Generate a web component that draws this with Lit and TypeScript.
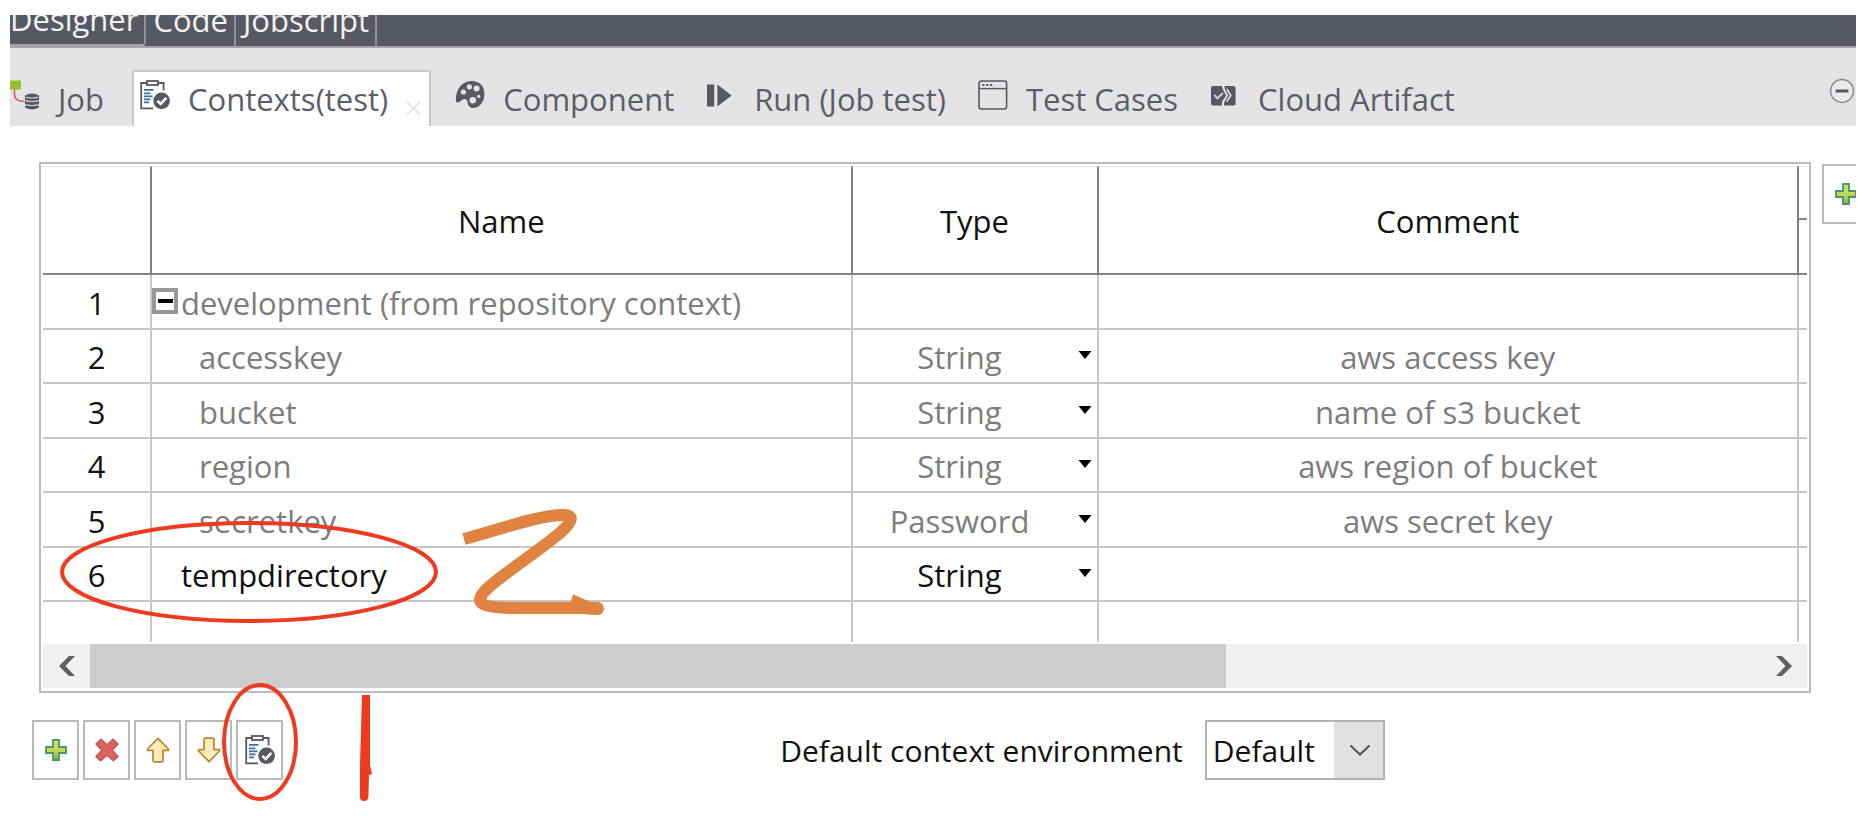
import { LitElement, html, css, svg, nothing } from "lit";
import { customElement, state } from "lit/decorators.js";
import { classMap } from "lit/directives/class-map.js";

interface ContextRow {
  id: number;
  name: string;
  type?: string;
  comment?: string;
  kind: "group" | "child" | "own";
}

const ROWS: ContextRow[] = [
  { id: 1, name: "development (from repository context)", kind: "group" },
  { id: 2, name: "accesskey", type: "String", comment: "aws access key", kind: "child" },
  { id: 3, name: "bucket", type: "String", comment: "name of s3 bucket", kind: "child" },
  { id: 4, name: "region", type: "String", comment: "aws region of bucket", kind: "child" },
  { id: 5, name: "secretkey", type: "Password", comment: "aws secret key", kind: "child" },
  { id: 6, name: "tempdirectory", type: "String", kind: "own" },
];

const contextsIcon = html`<svg class="icon" viewBox="0 0 30 30" aria-hidden="true">
  <path d="M7 3H1.2V28.4H13M18 3H23.6V10.5" fill="none" stroke="#565963" stroke-width="1.8" />
  <rect x="7" y="1" width="11" height="4" fill="none" stroke="#565963" stroke-width="1.8" />
  <path d="M4 9.9H13.5M4 13.4H10.5M4 16.4H12.5M4 19.4H10.5M4 22.4H9" stroke="#3f6f9f" stroke-width="1.6" />
  <circle cx="21.6" cy="20.8" r="8.3" fill="#565963" />
  <path d="M17.4 20.8L20.6 24L26.4 17.8" fill="none" stroke="#fff" stroke-width="2.6" />
</svg>`;

const jobIcon = html`<svg class="icon" viewBox="0 0 30 30" aria-hidden="true">
  <path d="M4.5 8V14.5Q4.5 21.5 15 21.5" fill="none" stroke="#d3605d" stroke-width="1.6" />
  <rect x="0" y="0.6" width="11" height="9" rx="1" fill="#98bf2e" />
  <path d="M15 15.5Q22 11.5 29 15.5V27.5Q22 31.5 15 27.5Z" fill="#565963" />
  <path d="M16 17.3Q22 18.7 28 17.3M15 20.6Q22 22.4 29 20.6M15 24.6Q22 26.4 29 24.6" fill="none" stroke="#d2d3d6" stroke-width="1.2" />
</svg>`;

const paletteIcon = html`<svg class="icon" viewBox="0 0 30 30" aria-hidden="true">
  <path d="M2.2 22.4C.6 22 .6 18 1.4 14.6C3.2 6.6 9 1 16.6 1C24.6 1 29.4 6 29.4 13.6C29.4 21.6 24.6 28 19 28C14.6 28 13 25.4 12.6 22.4C12 19 9.4 18.2 6.8 20C5 21.4 4 22.8 2.2 22.4Z" fill="#565963" />
  <g fill="#e4e4e4">
    <circle cx="8.4" cy="12" r="2.6" /><circle cx="14.4" cy="6.8" r="2.6" />
    <circle cx="21.6" cy="8.6" r="3" /><circle cx="17.8" cy="20.2" r="3.3" /><circle cx="23.8" cy="16.4" r="1.6" />
  </g>
</svg>`;

const runIcon = html`<svg class="icon" viewBox="0 0 30 30" aria-hidden="true">
  <path d="M1 4.5H8.2V26.5H1ZM11.4 4.5L25.6 15.5L11.4 26.5Z" fill="#565963" />
</svg>`;

const windowIcon = html`<svg class="icon" viewBox="0 0 30 30" aria-hidden="true">
  <rect x="1" y="1" width="27.6" height="28" rx="2.4" fill="none" stroke="#565963" stroke-width="1.6" />
  <path d="M1 8.6H28.6" stroke="#565963" stroke-width="1.4" />
  <path d="M4.4 4.9H14.6" stroke="#565963" stroke-width="2" stroke-dasharray="2.2 1.6" />
</svg>`;

const artifactIcon = html`<svg class="icon" viewBox="0 0 30 30" aria-hidden="true">
  <path d="M3 6H11.800L13.400 10.500L16.200 15.500L12 21.500V25.500H3Q1 25.500 1 23.500V8Q1 6 3 6Z" fill="#565963" />
  <path d="M14.400 6H23.600Q25.600 6 25.600 8V23.500Q25.600 25.500 23.600 25.500H14.200V22L18.200 15.500L15.200 10Z" fill="#565963" />
  <path d="M4.400 15L7.400 18.400L12.800 13" fill="none" stroke="#d4d5d8" stroke-width="2" />
  <path d="M16.800 9L20.800 15.500L16.600 21.600" fill="none" stroke="#e4e4e4" stroke-width="1.600" />
</svg>`;

const plusIcon = html`<svg class="tool-icon" viewBox="0 0 26 26" aria-hidden="true">
  <defs><linearGradient id="g" x1="0" y1="0" x2="0" y2="1"><stop offset="0" stop-color="#cfe07a" /><stop offset=".5" stop-color="#c3d95a" /><stop offset="1" stop-color="#7fb548" /></linearGradient></defs>
  <path d="M10 3H16V10H23V16H16V23H10V16H3V10H10Z" fill="url(#g)" stroke="#4a9569" stroke-width="1.8" />
</svg>`;

const removeIcon = html`<svg class="tool-icon" viewBox="0 0 26 26" aria-hidden="true">
  <path d="M7 2.5L13 8.2L19 2.5L23.8 7L18 13L23.8 19.5L19.4 23.5L13 18L6.6 23.5L2.2 19.5L8 13L2.2 7Z" fill="#dc6460" stroke="#c9595a" stroke-width="1.8" stroke-linejoin="round" />
</svg>`;

const arrow = (down: boolean) => html`<svg class=${down ? "tool-icon down" : "tool-icon"} viewBox="0 0 26 26" aria-hidden="true">
  <defs><linearGradient id="a" x1="0" y1="0" x2="1" y2="0"><stop offset="0" stop-color="#fffbe2" /><stop offset="1" stop-color="#f9e190" /></linearGradient></defs>
  <path d="M13 1.4L23.4 12V13.4H18V23.4Q18 24.8 16.6 24.8H9.4Q8 24.8 8 23.4V13.4H2.6V12Z" fill="url(#a)" stroke="#bb862f" stroke-width="1.7" stroke-linejoin="round" />
</svg>`;

@customElement("context-annotations")
export class ContextAnnotations extends LitElement {
  static styles = css`
    :host {
      position: absolute;
      top: 0;
      left: 0;
      pointer-events: none;
    }
    svg {
      display: block;
    }
  `;

  render() {
    return html`<svg width="640" height="816" viewBox="0 0 640 816" aria-hidden="true">
      ${svg`
        <g fill="none" stroke="#ee3a1f" stroke-width="4">
          <ellipse cx="249" cy="572" rx="187" ry="49" />
          <ellipse cx="260" cy="742" rx="36" ry="57" />
        </g>
        <path d="M362 695H370V765L372 774L369 775L368.4 797Q368 801 364 801Q360 801 360 797V766Z" fill="#ee3a1f" />
        <path d="M464 539C500 529 541 515 563 515C575 515 572 522 561 532C540 550 510 569 490 586C472 602 478 608 513 608H575" fill="none" stroke="#e08340" stroke-width="12" />
        <path d="M573 594.6L591 602H598Q604 603 604 609Q603 615 597 615Q591 615 585 614H568V604H570Z" fill="#e08340" />
      `}
    </svg>`;
  }
}

@customElement("app-root")
export class AppRoot extends LitElement {
  @state() private expanded = true;

  static styles = css`
    :host {
      display: block;
      position: relative;
      min-height: 100vh;
      box-sizing: border-box;
      padding: 15px 14px 0 10px;
      background: #fff;
      color: #111;
      font-family: "Open Sans", "Noto Sans", sans-serif;
      font-size: 31px;
      line-height: 42px;
    }
    *,
    *::before {
      box-sizing: border-box;
    }
    button,
    select {
      font: inherit;
      color: inherit;
      margin: 0;
      padding: 0;
      border: 0;
      border-radius: 0;
      background: none;
    }
    svg {
      display: block;
      flex: none;
    }
    .frame {
      overflow: hidden;
    }

    .editor-tabs {
      display: flex;
      align-items: flex-end;
      height: 33px;
      overflow: hidden;
      background: #565963;
      color: #f2f2f4;
      border-bottom: 2px solid #a3a4a8;
    }
    .editor-tabs button {
      flex: none;
      height: 52px;
      padding: 0 6px 0 7px;
      border-right: 2px solid #8f9197;
      line-height: 52px;
    }
    .editor-tabs .current {
      padding-left: 0;
      border-bottom: 2px solid #a3a4a8;
      border-bottom-right-radius: 4px;
      line-height: 50px;
    }

    .view-tabs {
      display: flex;
      align-items: flex-end;
      height: 78px;
      background: #e4e4e4;
      color: #5b5e69;
    }
    .view-tab {
      display: flex;
      align-items: center;
      height: 56px;
      padding: 2px 16px 0;
      white-space: nowrap;
    }
    .view-tab:first-child {
      padding-left: 0;
    }
    .view-tab.active {
      gap: 18px;
      margin: 0 8px 0 12px;
      padding: 0 8px 0 6px;
      background: #fff;
      border: 2px solid #c9c9c9;
      border-bottom: 0;
    }
    .view-tab button {
      display: flex;
      align-items: center;
      gap: 18px;
    }
    .icon {
      width: 30px;
      height: 30px;
    }
    .view-tab .icon {
      margin-bottom: 8px;
    }
    .view-tab .close {
      align-self: flex-end;
      padding-bottom: 10px;
    }
    .collapse {
      align-self: center;
      margin: 8px 1px 0 auto;
    }

    .editor {
      display: flex;
      align-items: flex-start;
      gap: 11px;
      padding: 36px 0 0 29px;
    }
    .grid {
      flex: 1;
      min-width: 0;
      padding: 2px;
      border: 2px solid #bbbcc3;
    }
    .side {
      width: 34px;
      padding-top: 2px;
    }

    table {
      width: 100%;
      table-layout: fixed;
      border-collapse: separate;
      border-spacing: 0;
    }
    .col-index {
      width: 109px;
    }
    .col-type {
      width: 246px;
    }
    .col-rest {
      width: 8px;
    }
    th,
    td {
      padding: 2px 0 0;
      font-weight: 400;
      text-align: center;
      border-right: 2px solid #c6c6c6;
      border-bottom: 2px solid #c6c6c6;
      white-space: nowrap;
    }
    thead th {
      border-right-color: #7f7f7f;
      border-bottom-color: #868686;
    }
    thead tr:first-child th,
    thead tr:first-child td {
      height: 54px;
      border-top: 1px solid #e4e4e4;
    }
    thead td {
      height: 55px;
      border-bottom-color: #868686;
    }
    tr > .rest {
      border-right: 0;
    }
    tbody tr {
      height: 54px;
    }
    tbody tr:nth-child(odd) {
      height: 55px;
    }
    tbody tr.spare:last-child {
      height: 40px;
    }
    .spare td {
      border-bottom: 0;
    }
    .inherited .name,
    .inherited .type,
    .inherited .comment {
      color: #7d7d7d;
    }
    .name {
      text-align: left;
      padding-left: 29px;
    }
    .child .name {
      padding-left: 47px;
    }
    .group .name {
      padding-left: 0;
    }
    .group-label {
      display: flex;
      align-items: center;
      gap: 3px;
    }
    .toggle {
      display: grid;
      place-items: center;
      width: 26px;
      height: 26px;
      margin-bottom: 4px;
      border: 4px solid #979797;
    }
    .toggle::before {
      content: "";
      width: 15px;
      height: 4px;
      background: #000;
    }
    .type-cell {
      position: relative;
      display: flex;
      align-items: center;
    }
    .type-cell select {
      appearance: none;
      width: 100%;
      height: 42px;
      padding-right: 30px;
      opacity: 1;
      text-align-last: center;
    }
    .type-cell svg {
      position: absolute;
      right: 5px;
      pointer-events: none;
    }

    .scrollbar {
      display: flex;
      height: 44px;
      margin: 2px 0 1px;
      background: #f0f0f0;
    }
    .scrollbar button {
      display: grid;
      place-items: center;
      width: 47px;
    }
    .track {
      flex: 1;
    }
    .thumb {
      width: 68%;
      height: 100%;
      background: #cdcdcd;
    }

    .footer {
      display: grid;
      grid-template-columns: auto 497fr auto 471fr;
      align-items: center;
      padding: 27px 0 0 22px;
    }
    .tools {
      display: flex;
      gap: 4px;
    }
    .tool {
      display: grid;
      place-items: center;
      flex: none;
      width: 47px;
      height: 60px;
      border: 2px solid #b9b9b9;
      background: #fff;
    }
    .tool-icon {
      width: 26px;
      height: 26px;
    }
    .down {
      transform: rotate(180deg);
    }
    .environment {
      grid-column: 3;
      display: flex;
      align-items: center;
      gap: 22px;
      font-size: 30px;
    }
    .environment label {
      padding-top: 2px;
    }
    .combo {
      position: relative;
      display: flex;
      align-items: center;
    }
    .combo select {
      appearance: none;
      width: 180px;
      height: 60px;
      padding: 2px 50px 0 6px;
      border: 2px solid #b3b3b3;
      background: linear-gradient(#e1e1e1, #e1e1e1) right / 49px 100% no-repeat #fff;
    }
    .combo svg {
      position: absolute;
      right: 14px;
      pointer-events: none;
    }
  `;

  private renderRow(row: ContextRow) {
    const inherited = row.kind !== "own";
    return html`<tr class=${classMap({ [row.kind]: true, inherited })}>
      <td>${row.id}</td>
      <td class="name">
        ${row.kind === "group"
          ? html`<div class="group-label">
              <button class="toggle" aria-label="Toggle group" aria-expanded=${this.expanded} @click=${() => (this.expanded = !this.expanded)}></button>${row.name}
            </div>`
          : row.name}
      </td>
      <td class="type">
        ${row.type
          ? html`<div class="type-cell">
              <select aria-label="Type of ${row.name}"><option>${row.type}</option></select>
              <svg width="14" height="42" viewBox="0 0 14 42" aria-hidden="true"><path d="M0.5 15H13.5L7 23Z" fill="#000" /></svg>
            </div>`
          : nothing}
      </td>
      <td class="comment">${row.comment ?? nothing}</td>
      <td class="rest"></td>
    </tr>`;
  }

  render() {
    const rows = ROWS.filter((r) => this.expanded || r.kind !== "child");
    return html`
      <div class="frame">
        <nav class="editor-tabs" aria-label="Editor">
          <button class="current">Designer</button><button>Code</button><button>Jobscript</button>
        </nav>
        <div class="view-tabs">
          <div class="view-tab"><button>${jobIcon}Job</button></div>
          <div class="view-tab active">
            <button>${contextsIcon}Contexts(test)</button>
            <button class="close" aria-label="Close">
              <svg width="15" height="15" viewBox="0 0 15 15"><path d="M1 1L14 14M14 1L1 14" stroke="#dedede" stroke-width="1.4" /></svg>
            </button>
          </div>
          <div class="view-tab"><button>${paletteIcon}Component</button></div>
          <div class="view-tab"><button>${runIcon}Run (Job test)</button></div>
          <div class="view-tab"><button>${windowIcon}Test Cases</button></div>
          <div class="view-tab"><button>${artifactIcon}Cloud Artifact</button></div>
          <button class="collapse" aria-label="Minimize">
            <svg width="26" height="26" viewBox="0 0 26 26">
              <circle cx="13" cy="13" r="11.4" fill="#ebebeb" stroke="#888a92" stroke-width="1.5" />
              <path d="M6.6 13H19.4" stroke="#565963" stroke-width="3" />
            </svg>
          </button>
        </div>

        <div class="editor">
          <div class="grid">
            <table>
              <colgroup>
                <col class="col-index" /><col /><col class="col-type" /><col /><col class="col-rest" />
              </colgroup>
              <thead>
                <tr>
                  <th rowspan="2"></th>
                  <th rowspan="2" scope="col">Name</th>
                  <th rowspan="2" scope="col">Type</th>
                  <th rowspan="2" scope="col">Comment</th>
                  <td class="rest"></td>
                </tr>
                <tr><td class="rest"></td></tr>
              </thead>
              <tbody>
                ${rows.map((r) => this.renderRow(r))}
                <tr class="spare"><td></td><td></td><td></td><td></td><td class="rest"></td></tr>
              </tbody>
            </table>
            <div class="scrollbar">
              <button aria-label="Scroll left"><svg width="18" height="22" viewBox="0 0 18 22"><path d="M11 1H17L7.5 11L17 21H11L1 11Z" fill="#606060" /></svg></button>
              <div class="track"><div class="thumb"></div></div>
              <button aria-label="Scroll right"><svg width="18" height="22" viewBox="0 0 18 22"><path d="M7 1H1L10.5 11L1 21H7L17 11Z" fill="#606060" /></svg></button>
            </div>
          </div>
          <div class="side"><button class="tool" aria-label="Add environment">${plusIcon}</button></div>
        </div>

        <div class="footer">
          <div class="tools">
            <button class="tool" aria-label="Add">${plusIcon}</button>
            <button class="tool" aria-label="Remove">${removeIcon}</button>
            <button class="tool" aria-label="Move up">${arrow(false)}</button>
            <button class="tool" aria-label="Move down">${arrow(true)}</button>
            <button class="tool" aria-label="Select contexts">${contextsIcon}</button>
          </div>
          <div class="environment">
            <label for="environment">Default context environment</label>
            <div class="combo">
              <select id="environment"><option>Default</option></select>
              <svg width="22" height="12" viewBox="0 0 22 12" aria-hidden="true"><path d="M1.5 1.5L11 10.5L20.5 1.5" fill="none" stroke="#555" stroke-width="2" /></svg>
            </div>
          </div>
        </div>
      </div>
      <context-annotations></context-annotations>
    `;
  }
}
